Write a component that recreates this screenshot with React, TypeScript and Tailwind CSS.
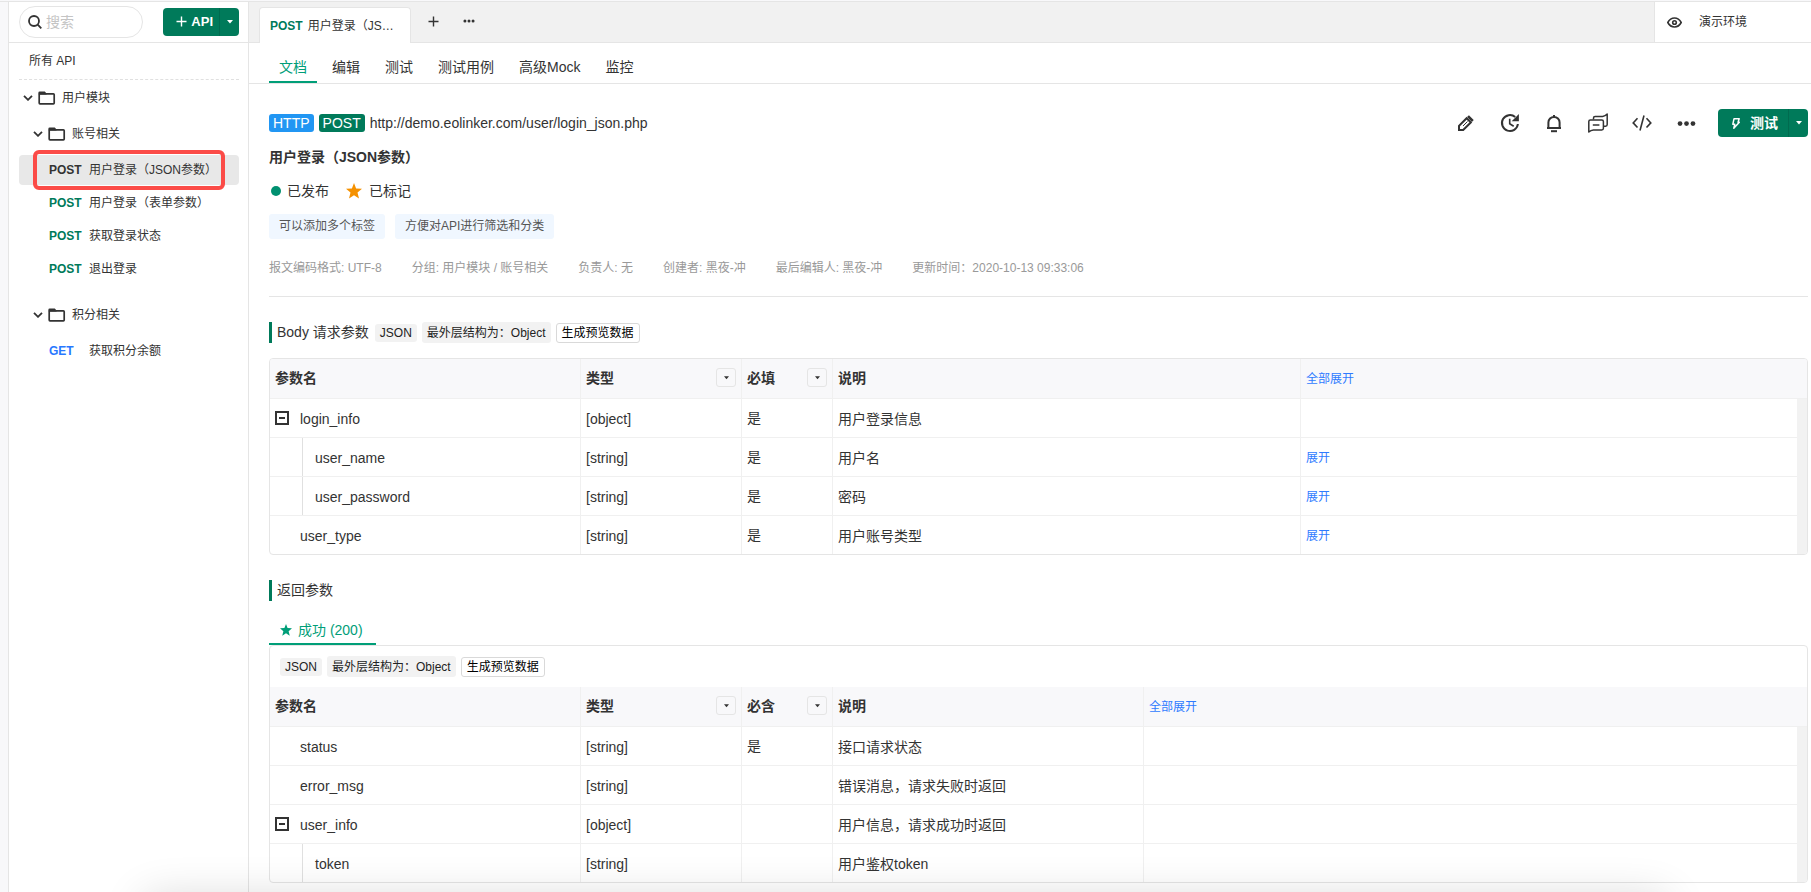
import type { ReactNode } from "react";

type Param = {
  name: string;
  kind: "branch" | "leaf" | "child";
  type: string;
  required: string;
  desc: string;
  expandable?: boolean;
};

const bodyParams: Param[] = [
  { name: "login_info", kind: "branch", type: "[object]", required: "是", desc: "用户登录信息" },
  { name: "user_name", kind: "child", type: "[string]", required: "是", desc: "用户名", expandable: true },
  { name: "user_password", kind: "child", type: "[string]", required: "是", desc: "密码", expandable: true },
  { name: "user_type", kind: "leaf", type: "[string]", required: "是", desc: "用户账号类型", expandable: true },
];

const responseParams: Param[] = [
  { name: "status", kind: "leaf", type: "[string]", required: "是", desc: "接口请求状态" },
  { name: "error_msg", kind: "leaf", type: "[string]", required: "", desc: "错误消息，请求失败时返回" },
  { name: "user_info", kind: "branch", type: "[object]", required: "", desc: "用户信息，请求成功时返回" },
  { name: "token", kind: "child", type: "[string]", required: "", desc: "用户鉴权token" },
];

const pageTabs = ["文档", "编辑", "测试", "测试用例", "高级Mock", "监控"];

const meta = [
  "报文编码格式: UTF-8",
  "分组: 用户模块 / 账号相关",
  "负责人: 无",
  "创建者: 黑夜-冲",
  "最后编辑人: 黑夜-冲",
  "更新时间：2020-10-13 09:33:06",
];

function Caret({ className = "" }: { className?: string }) {
  return (
    <svg width="6" height="4" viewBox="0 0 6 4" className={className} aria-hidden="true">
      <path d="M0 0h6L3 3.6z" fill="currentColor" />
    </svg>
  );
}

function PlusIcon() {
  return (
    <svg width="11" height="11" viewBox="0 0 11 11" fill="none" stroke="currentColor" strokeWidth="1.4" aria-hidden="true">
      <path d="M5.5 .5v10M.5 5.5h10" />
    </svg>
  );
}

function DotsIcon({ size }: { size: number }) {
  return (
    <svg width={size} height={size} viewBox="0 0 20 20" fill="currentColor" aria-hidden="true">
      <circle cx="3.2" cy="10" r="2.5" />
      <circle cx="10" cy="10" r="2.5" />
      <circle cx="16.8" cy="10" r="2.5" />
    </svg>
  );
}

function Star({ size, className }: { size: number; className: string }) {
  return (
    <svg width={size} height={size} viewBox="0 0 16 16" className={className} aria-hidden="true">
      <path d="M8 0l2.1 5.4 5.9.4-4.5 3.7L13 15.6 8 12.3 3 15.6l1.5-6.1L0 5.8l5.9-.4z" fill="currentColor" />
    </svg>
  );
}

function Folder({ label, nested }: { label: string; nested?: boolean }) {
  return (
    <button
      type="button"
      aria-expanded="true"
      className={`flex h-9 w-full items-center text-left text-xs ${nested ? "pl-6" : "pl-[14px]"}`}
    >
      <svg width="10" height="6" viewBox="0 0 10 6" fill="none" stroke="#333" strokeWidth="1.8" aria-hidden="true">
        <path d="M1 .8l4 4 4-4" />
      </svg>
      <svg width="18" height="14" viewBox="0 0 18 14" className="ml-[5px]" aria-hidden="true">
        <rect x="1.200" y="2.900" width="15" height="9.900" rx=".8" fill="none" stroke="#333" strokeWidth="1.700" />
        <path d="M.4 3.600V1.700Q.4.400 1.700.400h5.100l1.700 2.200v1z" fill="#333" />
      </svg>
      <span className="ml-[6px]">{label}</span>
    </button>
  );
}

function ApiRow({ method, label, selected }: { method: string; label: string; selected?: boolean }) {
  const tone = selected ? "text-[#333]" : method === "GET" ? "text-[#2878ff]" : "text-[#007a5a]";
  return (
    <div className="relative mt-[3px] mr-[9px] ml-[10px]">
      <a href="#" className={`flex h-[30px] items-center rounded pl-[30px] text-xs ${selected ? "bg-[#e8e8e8]" : ""}`}>
        <span className={`w-10 font-bold ${tone}`}>{method}</span>
        <span>{label}</span>
      </a>
      {selected && (
        <div className="pointer-events-none absolute -top-[5px] left-[14px] h-10 w-48 rounded-md border-4 border-[#fb4b47]" />
      )}
    </div>
  );
}

function FormatTags() {
  return (
    <div className="flex items-center gap-[5px] text-xs text-[#222]">
      <span className="flex h-[18px] items-center rounded-[3px] bg-[#f2f2f2] px-[5px]">JSON</span>
      <span className="flex h-[21px] items-center rounded-[3px] bg-[#f2f2f2] px-[5px]">最外层结构为：Object</span>
      <button type="button" className="flex h-5 items-center rounded-[3px] border border-[#d9d9d9] bg-white px-[5px] text-black">
        生成预览数据
      </button>
    </div>
  );
}

function FilterHead({ label }: { label: string }) {
  return (
    <th scope="col" className="border-b border-l border-[#f0f0f0] px-[5px] pb-0.5 text-left font-bold">
      <div className="flex items-center justify-between">
        <span>{label}</span>
        <button
          type="button"
          aria-label={`筛选${label}`}
          className="flex h-[19px] w-5 items-center justify-center rounded-[3px] border border-[#e5e5e5]"
        >
          <Caret className="w-[5px]" />
        </button>
      </div>
    </th>
  );
}

function ParamName({ param }: { param: Param }) {
  if (param.kind === "branch") {
    return (
      <div className="flex h-[38px] items-center pl-[5px]">
        <button type="button" aria-label={`折叠 ${param.name}`} className="mr-[11px]">
          <svg width="14" height="14" viewBox="0 0 14 14" fill="none" stroke="#333" strokeWidth="2" className="block" aria-hidden="true">
            <path d="M1 1h12v12H1zM4 7h6" />
          </svg>
        </button>
        <span className="pt-0.5">{param.name}</span>
      </div>
    );
  }
  if (param.kind === "child") {
    return (
      <div className="flex h-[38px] pl-8">
        <span className="flex items-center border-l border-[#e0e0e0] pt-0.5 pl-3">{param.name}</span>
      </div>
    );
  }
  return <div className="flex h-[38px] items-center pt-0.5 pl-[30px]">{param.name}</div>;
}

function ParamTable({ params, requiredLabel, descWidth }: { params: Param[]; requiredLabel: string; descWidth: string }) {
  return (
    <table className="w-full table-fixed border-separate border-spacing-0 text-sm">
      <colgroup>
        <col className="w-[310px]" />
        <col className="w-[161px]" />
        <col className="w-[91px]" />
        <col className={descWidth} />
        <col />
        <col className="w-[10px]" />
      </colgroup>
      <thead className="bg-[#f8f8fa]">
        <tr className="h-10">
          <th scope="col" className="border-b border-[#f0f0f0] px-[5px] pb-0.5 text-left font-bold">参数名</th>
          <FilterHead label="类型" />
          <FilterHead label={requiredLabel} />
          <th scope="col" className="border-b border-l border-[#f0f0f0] px-[5px] pb-0.5 text-left font-bold">说明</th>
          <th scope="col" className="border-b border-l border-[#f0f0f0] px-[5px] text-left text-xs font-normal">
            <button type="button" className="text-[#2f7bff]">全部展开</button>
          </th>
          <td className="border-b border-[#f0f0f0]" />
        </tr>
      </thead>
      <tbody>
        {params.map((param, i) => {
          const line = i < params.length - 1 ? "border-b border-[#f0f0f0]" : "border-[#f0f0f0]";
          return (
            <tr key={param.name}>
              <td className={line}><ParamName param={param} /></td>
              <td className={`border-l px-[5px] pt-0.5 ${line}`}>{param.type}</td>
              <td className={`border-l px-[5px] ${line}`}>{param.required}</td>
              <td className={`border-l px-[5px] pt-0.5 ${line}`}>{param.desc}</td>
              <td className={`border-l px-[5px] pt-0.5 text-xs ${line}`}>
                {param.expandable && <button type="button" className="text-[#2f7bff]">展开</button>}
              </td>
              <td className="bg-[#f2f2f2]" />
            </tr>
          );
        })}
      </tbody>
    </table>
  );
}

function ToolButton({ label, children }: { label: string; children: ReactNode }) {
  return (
    <button type="button" aria-label={label} className="flex size-5 items-center justify-center">
      {children}
    </button>
  );
}

function Toolbar() {
  return (
    <div className="flex items-center gap-[22px]">
      <div className="flex items-center gap-6">
        <ToolButton label="编辑">
          <svg width="20" height="20" viewBox="0 0 20 20" fill="none" stroke="currentColor" strokeWidth="2" aria-hidden="true">
            <path d="M3 17v-4.200l7.600-7.600 4.200 4.200L7.200 17z" />
            <path d="M12 3.200l4.800 4.800" strokeWidth="2.600" />
            <path d="M7 13l4.500-4.500" strokeWidth="1" />
          </svg>
        </ToolButton>
        <ToolButton label="历史">
          <svg width="20" height="20" viewBox="0 0 20 20" fill="none" stroke="currentColor" strokeWidth="2" aria-hidden="true">
            <path d="M17.900 11A8 8 0 1 1 15.200 4" />
            <path d="M18.900 1v7.200h-7.200z" fill="currentColor" stroke="none" />
            <path d="M9.700 5.800v5l4 2.400" strokeWidth="1.600" />
          </svg>
        </ToolButton>
        <ToolButton label="通知">
          <svg width="20" height="20" viewBox="0 0 20 20" fill="none" stroke="currentColor" strokeWidth="2" aria-hidden="true">
            <path d="M4.400 15V9.500a5.600 5.600 0 0 1 11.200 0V15" />
            <path d="M3 15h14M10 2v2" />
            <path d="M7 18.200h6" />
          </svg>
        </ToolButton>
        <ToolButton label="评论">
          <svg width="20" height="20" viewBox="0 0 20 20" fill="none" stroke="currentColor" strokeWidth="1.500" strokeLinejoin="round" aria-hidden="true">
            <path d="M5.500 6.500V5.100Q5.500 3.500 7.100 3.500h7.500q2.600-.2 4.600-2.400v10.500q0 1.600-1.600 1.600h-2" />
            <path d="M.8 19V8.600Q.8 7 2.400 7h11.400q1.600 0 1.600 1.600v6.700q0 1.600-1.600 1.600H5.400Q2.800 17.100.8 19z" />
            <path d="M4.800 12h6.600" />
          </svg>
        </ToolButton>
        <ToolButton label="代码">
          <svg width="20" height="20" viewBox="0 0 20 20" fill="none" stroke="currentColor" strokeWidth="1.600" aria-hidden="true">
            <path d="M5.500 5.300L1.200 9.900l4.300 4.600M14.500 5.300l4.300 4.600-4.300 4.600M12 2.500L8 17.500" />
          </svg>
        </ToolButton>
        <ToolButton label="更多">
          <DotsIcon size={19} />
        </ToolButton>
      </div>
      <div className="flex h-7 rounded bg-[#007a5a] text-sm font-bold text-white">
        <button type="button" className="flex items-center gap-[10px] pr-[10px] pl-[14px]">
          <svg width="8" height="11" viewBox="0 0 8 11" fill="none" stroke="currentColor" strokeWidth="1.500" strokeLinejoin="round" aria-hidden="true">
            <path d="M2 .8h5.200L6 4.200h1.300L1.800 10.200l.9-3.900H.8z" />
          </svg>
          测试
        </button>
        <button type="button" aria-label="更多测试选项" className="flex w-5 items-center justify-center border-l border-[#006b4f]">
          <Caret />
        </button>
      </div>
    </div>
  );
}

function Sidebar() {
  return (
    <aside className="w-[241px] shrink-0 border-x border-[#e5e5e5] bg-white">
      <div className="flex h-[41px] items-center justify-between border-b border-[#e5e5e5] pr-[9px] pb-px pl-[10px]">
        <div className="flex h-8 w-[124px] items-center gap-1 rounded-full border border-[#e5e5e5] px-2">
          <svg width="14" height="14" viewBox="0 0 14 14" fill="none" stroke="#333" strokeWidth="1.800" className="shrink-0" aria-hidden="true">
            <circle cx="6" cy="6" r="5" />
            <path d="M9.700 9.700l3.600 3.600" />
          </svg>
          <input
            type="text"
            aria-label="搜索"
            placeholder="搜索"
            className="h-6 w-full min-w-0 text-sm outline-none placeholder:text-[#c4c4c4]"
          />
        </div>
        <div className="flex h-7 rounded bg-[#007a5a] text-white">
          <button type="button" className="flex w-14 items-center justify-end gap-1 pr-[6px] text-[13px] font-bold">
            <PlusIcon />
            API
          </button>
          <button type="button" aria-label="更多新建选项" className="flex w-5 items-center justify-center border-l border-[#006b4f]">
            <Caret />
          </button>
        </div>
      </div>
      <a href="#" className="mr-[9px] ml-[10px] flex h-[37px] items-center border-b border-dashed border-[#e0e0e0] pl-[10px] text-xs">
        所有 API
      </a>
      <Folder label="用户模块" />
      <Folder label="账号相关" nested />
      <ApiRow method="POST" label="用户登录（JSON参数）" selected />
      <ApiRow method="POST" label="用户登录（表单参数）" />
      <ApiRow method="POST" label="获取登录状态" />
      <ApiRow method="POST" label="退出登录" />
      <div className="mt-[13px]">
        <Folder label="积分相关" nested />
        <ApiRow method="GET" label="获取积分余额" />
      </div>
    </aside>
  );
}

export default function App() {
  return (
    <div className="flex min-h-screen flex-col bg-[#f8f8fa] pt-px font-['Liberation_Sans','Noto_Sans_CJK_SC',sans-serif] leading-5 text-[#333]">
      <div className="flex flex-1 border-t border-[#e5e5e5] pl-2">
        <Sidebar />
        <main className="min-w-0 flex-1 bg-white">
          <div className="flex h-[41px] bg-[#f1f1f1]">
            <div className="w-[10px] border-b border-[#e5e5e5]" />
            <div className="mt-[5px] flex w-[152px] items-center gap-[5px] rounded-t border-x border-t border-[#e5e5e5] bg-white px-[10px] text-xs">
              <span className="font-bold text-[#007a5a]">POST</span>
              <span>用户登录（JS…</span>
            </div>
            <div className="flex flex-1 items-center border-b border-[#e5e5e5] pb-[2px] pl-[17px]">
              <button type="button" aria-label="新建标签页"><PlusIcon /></button>
              <button type="button" aria-label="标签页选项" className="ml-6"><DotsIcon size={12} /></button>
            </div>
            <div className="flex w-[157px] items-center gap-[17px] border-b border-l border-[#e5e5e5] bg-white pl-3 text-xs">
              <svg width="15" height="11" viewBox="0 0 15 11" fill="none" stroke="#333" strokeWidth="1.600" aria-hidden="true">
                <path d="M.8 5.500Q3.200 1 7.500 1t6.700 4.500Q11.800 10 7.500 10T.8 5.500z" />
                <circle cx="7.500" cy="5.500" r="1.800" />
              </svg>
              <span>演示环境</span>
            </div>
          </div>

          <nav className="flex h-[41px] gap-[5px] border-b border-[#e5e5e5] pl-5 text-sm">
            {pageTabs.map((tab, i) => (
              <button
                type="button"
                key={tab}
                aria-current={i === 0 ? "page" : undefined}
                className={`border-b-2 px-[10px] pt-[10px] ${i === 0 ? "border-[#009e78] text-[#009e78]" : "border-transparent"}`}
              >
                {tab}
              </button>
            ))}
          </nav>

          <div className="pt-[25px] pr-[3px] pb-[9px] pl-5">
            <div className="flex items-center justify-between">
              <div className="flex items-center gap-[5px] text-sm">
                <span className="flex h-[18px] items-center rounded-[3px] bg-[#2196f3] px-1 text-white">HTTP</span>
                <span className="flex h-[18px] items-center rounded-[3px] bg-[#007a5a] px-1 text-white">POST</span>
                <span>http://demo.eolinker.com/user/login_json.php</span>
              </div>
              <Toolbar />
            </div>

            <h1 className="mt-[10px] text-sm leading-5 font-bold">用户登录（JSON参数）</h1>

            <div className="mt-[14px] flex h-5 items-center text-sm">
              <span className="ml-[2px] size-[10px] rounded-full bg-[#009070]" />
              <span className="ml-[6px]">已发布</span>
              <Star size={16} className="ml-[17px] text-[#f59100]" />
              <span className="ml-[7px]">已标记</span>
            </div>

            <div className="mt-[13px] flex gap-[10px] text-xs text-[#555]">
              <span className="flex h-[25px] items-center rounded-[3px] bg-[#f0f7ff] px-[10px] pb-[2px]">可以添加多个标签</span>
              <span className="flex h-[25px] items-center rounded-[3px] bg-[#f0f7ff] px-[10px] pb-[2px]">方便对API进行筛选和分类</span>
            </div>

            <div className="mt-[19px] flex gap-[30px] border-b border-[#e5e5e5] pb-[18px] text-xs leading-5 text-[#999]">
              {meta.map((item) => (
                <span key={item}>{item}</span>
              ))}
            </div>

            <section className="mt-[25px]">
              <div className="flex h-[21px] items-center gap-[6px]">
                <h2 className="border-l-[3px] border-[#007a5a] pl-[5px] text-sm leading-[21px]">Body 请求参数</h2>
                <FormatTags />
              </div>
              <div className="mt-[15px] overflow-hidden rounded border border-[#e5e5e5]">
                <ParamTable params={bodyParams} requiredLabel="必填" descWidth="w-[468px]" />
              </div>
            </section>

            <section className="mt-[25px]">
              <h2 className="border-l-[3px] border-[#007a5a] pl-[5px] text-sm leading-[21px]">返回参数</h2>
              <div className="mt-[15px] flex h-[29px] text-sm">
                <button type="button" className="flex items-center gap-[6px] border-b-2 border-[#009e78] pr-[13px] pl-[11px] text-[#009e78]">
                  <Star size={12} className="" />
                  成功 (200)
                </button>
              </div>
              <div className="overflow-hidden rounded border border-[#e5e5e5]">
                <div className="flex h-[41px] items-center px-[10px]">
                  <FormatTags />
                </div>
                <ParamTable params={responseParams} requiredLabel="必含" descWidth="w-[311px]" />
              </div>
            </section>
          </div>
        </main>
      </div>

      <div className="pointer-events-none fixed inset-x-0 bottom-0 h-10 overflow-hidden px-36">
        <div className="mt-[46px] h-10 rounded-lg shadow-[0_0_44px_rgba(0,0,0,0.16)]" />
      </div>
    </div>
  );
}
